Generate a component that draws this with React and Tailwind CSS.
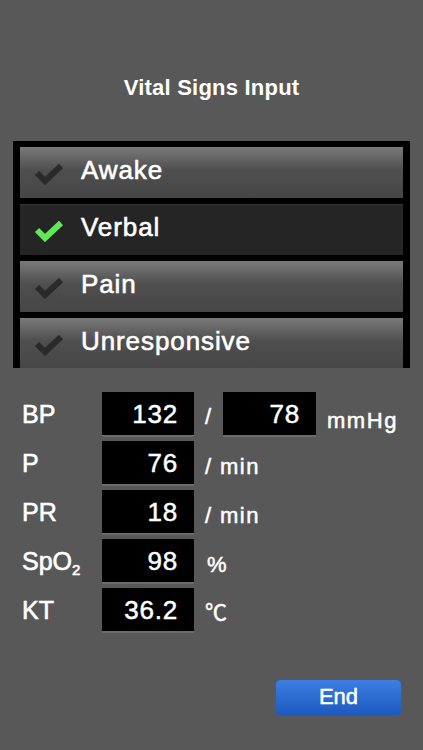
import React from 'react';

const font = { fontFamily: '"Liberation Sans", "Noto Sans CJK JP", Arial, sans-serif' };

function Check({ on }) {
  return (
    <svg width="30" height="24" viewBox="0 0 30 24" className="shrink-0">
      <polyline
        points="3,12 11,20 27,5"
        fill="none"
        stroke={on ? '#5fea55' : '#2a2a2a'}
        strokeWidth="6"
        strokeLinecap="butt"
        strokeLinejoin="miter"
      />
    </svg>
  );
}

function LevelRow({ label, selected }) {
  return (
    <div
      className={
        selected
          ? 'h-[51px] shrink-0 flex items-center gap-[17px] pl-[14px] bg-[#252525] border-t border-[#363636]'
          : 'h-[51px] shrink-0 flex items-center gap-[17px] pl-[14px] bg-gradient-to-b from-[#7a7a7a] via-[#4f4f4f] via-45% to-[#464646]'
      }
    >
      <Check on={selected} />
      <span className="text-white text-[26px] leading-none tracking-[0.035em] pb-[6px] [-webkit-text-stroke:0.6px_white]">{label}</span>
    </div>
  );
}

function Box({ value, w = 'w-[92px]' }) {
  return (
    <div className={`${w} h-[45px] shrink-0 bg-black border-b-2 border-[#6b6b6b] flex items-center justify-end pr-[16px]`}>
      <span className="text-white text-[26px] leading-none tracking-[0.03em] [-webkit-text-stroke:0.5px_white]">{value}</span>
    </div>
  );
}

function VitalRow({ label, children }) {
  return (
    <div className="h-[45px] flex items-center">
      <div className="w-[80px] text-white text-[25px] leading-none [-webkit-text-stroke:0.6px_white]">{label}</div>
      {children}
    </div>
  );
}

const levels = ['Awake', 'Verbal', 'Pain', 'Unresponsive'];
const unit = 'text-white text-[22px] [-webkit-text-stroke:0.5px_white]';

export default function App() {
  return (
    <div className="w-[423px] h-[750px] bg-[#585858] overflow-hidden" style={font}>
      <h1 className="pt-[75px] text-center text-white text-[22px] font-bold leading-[26px] tracking-[0.01em]">
        Vital Signs Input
      </h1>

      <div className="mt-[40px] mx-[13px] h-[227px] bg-black pt-[6px] px-[7px] flex flex-col gap-[6px] overflow-hidden">
        {levels.map((l) => (
          <LevelRow key={l} label={l} selected={l === 'Verbal'} />
        ))}
      </div>

      <div className="mt-[24px] pl-[22px] flex flex-col gap-[4px]">
        <VitalRow label="BP">
          <Box value="132" />
          <span className={`w-[29px] pl-[11px] pt-[4px] ${unit}`}>/</span>
          <Box value="78" w="w-[93px]" />
          <span className={`ml-[11px] tracking-[0.07em] pt-[12px] ${unit}`}>mmHg</span>
        </VitalRow>
        <VitalRow label="P">
          <Box value="76" />
          <span className={`ml-[11px] tracking-[0.065em] pt-[5px] ${unit}`}>/ min</span>
        </VitalRow>
        <VitalRow label="PR">
          <Box value="18" />
          <span className={`ml-[11px] tracking-[0.065em] pt-[5px] ${unit}`}>/ min</span>
        </VitalRow>
        <VitalRow label={<span>SpO<sub className="text-[15px] align-baseline relative top-[5px]">2</sub></span>}>
          <Box value="98" />
          <span className={`ml-[13px] pt-[5px] ${unit}`}>%</span>
        </VitalRow>
        <VitalRow label="KT">
          <Box value="36.2" />
          <span className={`ml-[11px] pt-[3px] ${unit}`}>℃</span>
        </VitalRow>
      </div>

      <div className="mt-[46px] flex justify-end pr-[21px]">
        <button className="w-[127px] h-[37px] rounded-[6px] bg-gradient-to-b from-[#3d7fe2] to-[#1c59bf] border border-[#2a5fb8] text-white text-[22px] leading-none pb-[2px] [-webkit-text-stroke:0.5px_white]">
          End
        </button>
      </div>
    </div>
  );
}
